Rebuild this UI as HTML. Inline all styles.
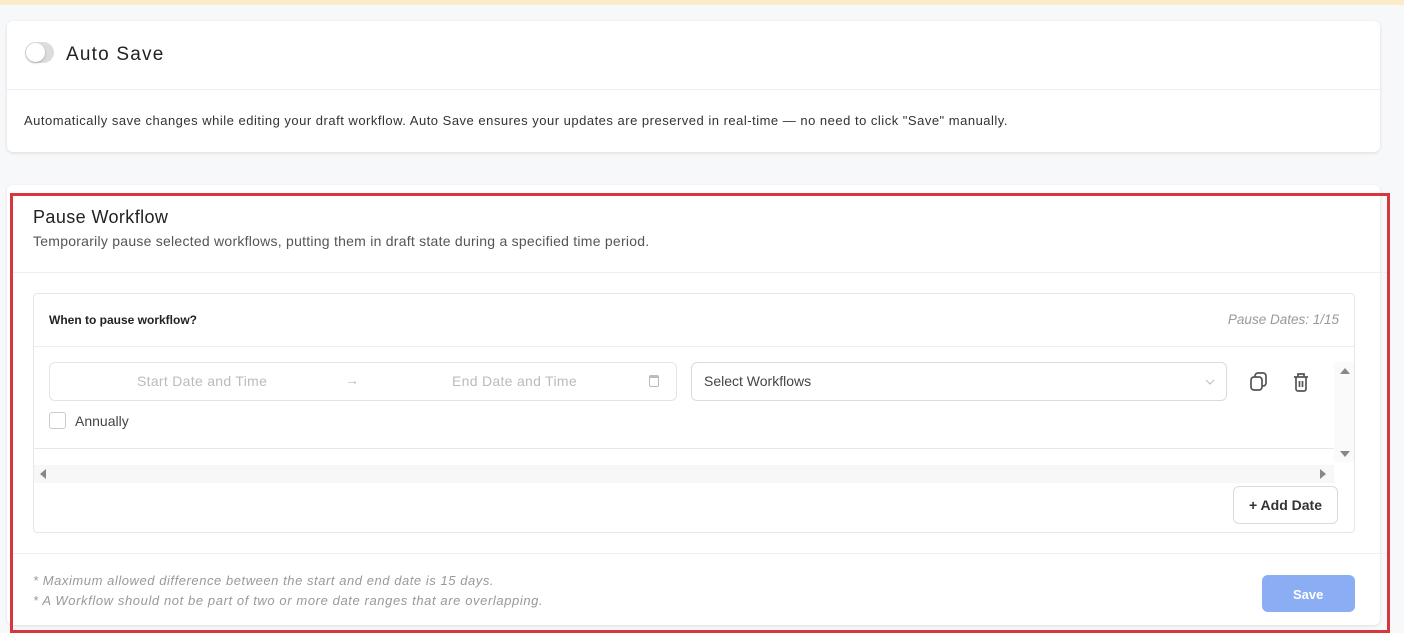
<!DOCTYPE html>
<html><head><style>
*{box-sizing:border-box;margin:0;padding:0}
body{width:1404px;height:612px;overflow:hidden;background:#f7f8fa;font-family:"Liberation Sans",sans-serif;position:relative}
.abs{position:absolute}
.t{position:absolute;white-space:nowrap}
</style></head><body>
<div class="abs" style="left:0;top:0;width:1404px;height:5px;background:#fcebc9"></div>
<div class="abs" style="left:7px;top:21px;width:1373px;height:131px;background:#fff;border-radius:6px;box-shadow:0 1px 3px rgba(0,0,0,.12)"></div>
<div class="abs" style="left:25px;top:42px;width:29px;height:21px;border-radius:11px;background:#dcdcdc"></div>
<div class="abs" style="left:26px;top:43px;width:19px;height:19px;border-radius:50%;background:#fff;box-shadow:0 1px 2px rgba(0,0,0,.25)"></div>
<div class="t" style="left:66px;top:44px;font-size:19px;letter-spacing:1.2px;color:#222">Auto Save</div>
<div class="abs" style="left:7px;top:89px;width:1373px;height:1px;background:#eeeff2"></div>
<div class="t" style="left:24px;top:113px;font-size:13px;color:#333;letter-spacing:0.5px">Automatically save changes while editing your draft workflow. Auto Save ensures your updates are preserved in real-time — no need to click "Save" manually.</div>
<div class="abs" style="left:7px;top:185px;width:1373px;height:440px;background:#fff;border-radius:6px;box-shadow:0 1px 3px rgba(0,0,0,.1)"></div>
<div class="abs" style="left:10px;top:193px;width:1380px;height:440px;border:3px solid #d8363e"></div>
<div class="t" style="left:33px;top:207px;font-size:18px;letter-spacing:0.4px;color:#222">Pause Workflow</div>
<div class="t" style="left:33px;top:233px;font-size:14px;letter-spacing:0.25px;color:#555">Temporarily pause selected workflows, putting them in draft state during a specified time period.</div>
<div class="abs" style="left:13px;top:272px;width:1374px;height:1px;background:#eeeff2"></div>
<div class="abs" style="left:33px;top:293px;width:1322px;height:240px;border:1px solid #e6e7ea;border-radius:4px"></div>
<div class="t" style="left:49px;top:313px;font-size:12px;font-weight:bold;color:#222">When to pause workflow?</div>
<div class="t" style="right:65px;top:312px;font-size:13.5px;font-style:italic;color:#999">Pause Dates: 1/15</div>
<div class="abs" style="left:34px;top:346px;width:1320px;height:1px;background:#eceef1"></div>
<div class="abs" style="left:49px;top:362px;width:628px;height:39px;border:1px solid #e3e4e8;border-radius:6px"></div>
<div class="t" style="left:137px;top:373px;font-size:14px;letter-spacing:0.3px;color:#bbb">Start Date and Time</div>
<div class="t" style="left:345px;top:372px;font-size:14px;color:#bbb">→</div>
<div class="t" style="left:452px;top:373px;font-size:14px;letter-spacing:0.3px;color:#bbb">End Date and Time</div>
<div class="abs" style="left:649px;top:375px;width:10px;height:12px;border:1px solid #bbb;border-radius:2px;border-top-width:3px"></div>
<div class="abs" style="left:691px;top:362px;width:536px;height:39px;border:1px solid #d9dbe0;border-radius:6px"></div>
<div class="t" style="left:704px;top:373px;font-size:14px;color:#444">Select Workflows</div>
<svg class="abs" style="left:1204px;top:377px" width="12" height="10"><path d="M2 3l4 4 4-4" fill="none" stroke="#bbb" stroke-width="1"/></svg>
<svg class="abs" style="left:1249px;top:371px" width="20" height="22" viewBox="0 0 20 22"><rect x="2" y="6" width="11" height="13" rx="3" fill="none" stroke="#555" stroke-width="1.7"/><path d="M6 6V5a3 3 0 0 1 3-3h5a3 3 0 0 1 3 3v7a3 3 0 0 1-3 3h-1" fill="none" stroke="#555" stroke-width="1.7"/></svg>
<svg class="abs" style="left:1292px;top:371px" width="18" height="22" viewBox="0 0 18 22"><path d="M2 6h14M6 6V3h6v3M4 6v12a2 2 0 0 0 2 2h6a2 2 0 0 0 2-2V6M7.5 10v6M10.5 10v6" fill="none" stroke="#555" stroke-width="1.7"/></svg>
<div class="abs" style="left:1334px;top:362px;width:20px;height:100px;background:#fafafa"></div>
<svg class="abs" style="left:1339px;top:366px" width="12" height="10"><path d="M1 8l5-6 5 6z" fill="#888"/></svg>
<svg class="abs" style="left:1339px;top:450px" width="12" height="10"><path d="M1 1l5 6 5-6z" fill="#888"/></svg>
<div class="abs" style="left:49px;top:412px;width:17px;height:17px;border:1px solid #ccc;border-radius:3px"></div>
<div class="t" style="left:75px;top:413px;font-size:14px;color:#444">Annually</div>
<div class="abs" style="left:34px;top:448px;width:1300px;height:1px;background:#e6e7ea"></div>
<div class="abs" style="left:34px;top:465px;width:1300px;height:18px;background:#f7f7f7"></div>
<svg class="abs" style="left:38px;top:468px" width="10" height="12"><path d="M8 1L2 6l6 5z" fill="#888"/></svg>
<svg class="abs" style="left:1318px;top:468px" width="10" height="12"><path d="M2 1l6 5-6 5z" fill="#888"/></svg>
<div class="abs" style="left:1233px;top:486px;width:105px;height:38px;border:1px solid #d9dbe0;border-radius:6px;background:#fff"></div>
<div class="t" style="left:1249px;top:497px;font-size:14px;font-weight:bold;color:#333">+ Add Date</div>
<div class="abs" style="left:13px;top:553px;width:1374px;height:1px;background:#eeeff2"></div>
<div class="t" style="left:33px;top:573px;font-size:13px;letter-spacing:0.55px;font-style:italic;color:#999">* Maximum allowed difference between the start and end date is 15 days.</div>
<div class="t" style="left:33px;top:593px;font-size:13px;letter-spacing:0.6px;font-style:italic;color:#999">* A Workflow should not be part of two or more date ranges that are overlapping.</div>
<div class="abs" style="left:1262px;top:575px;width:93px;height:37px;background:#8aadf4;border-radius:6px"></div>
<div class="t" style="left:1293px;top:587px;font-size:13px;font-weight:bold;color:#fff">Save</div>
</body></html>
